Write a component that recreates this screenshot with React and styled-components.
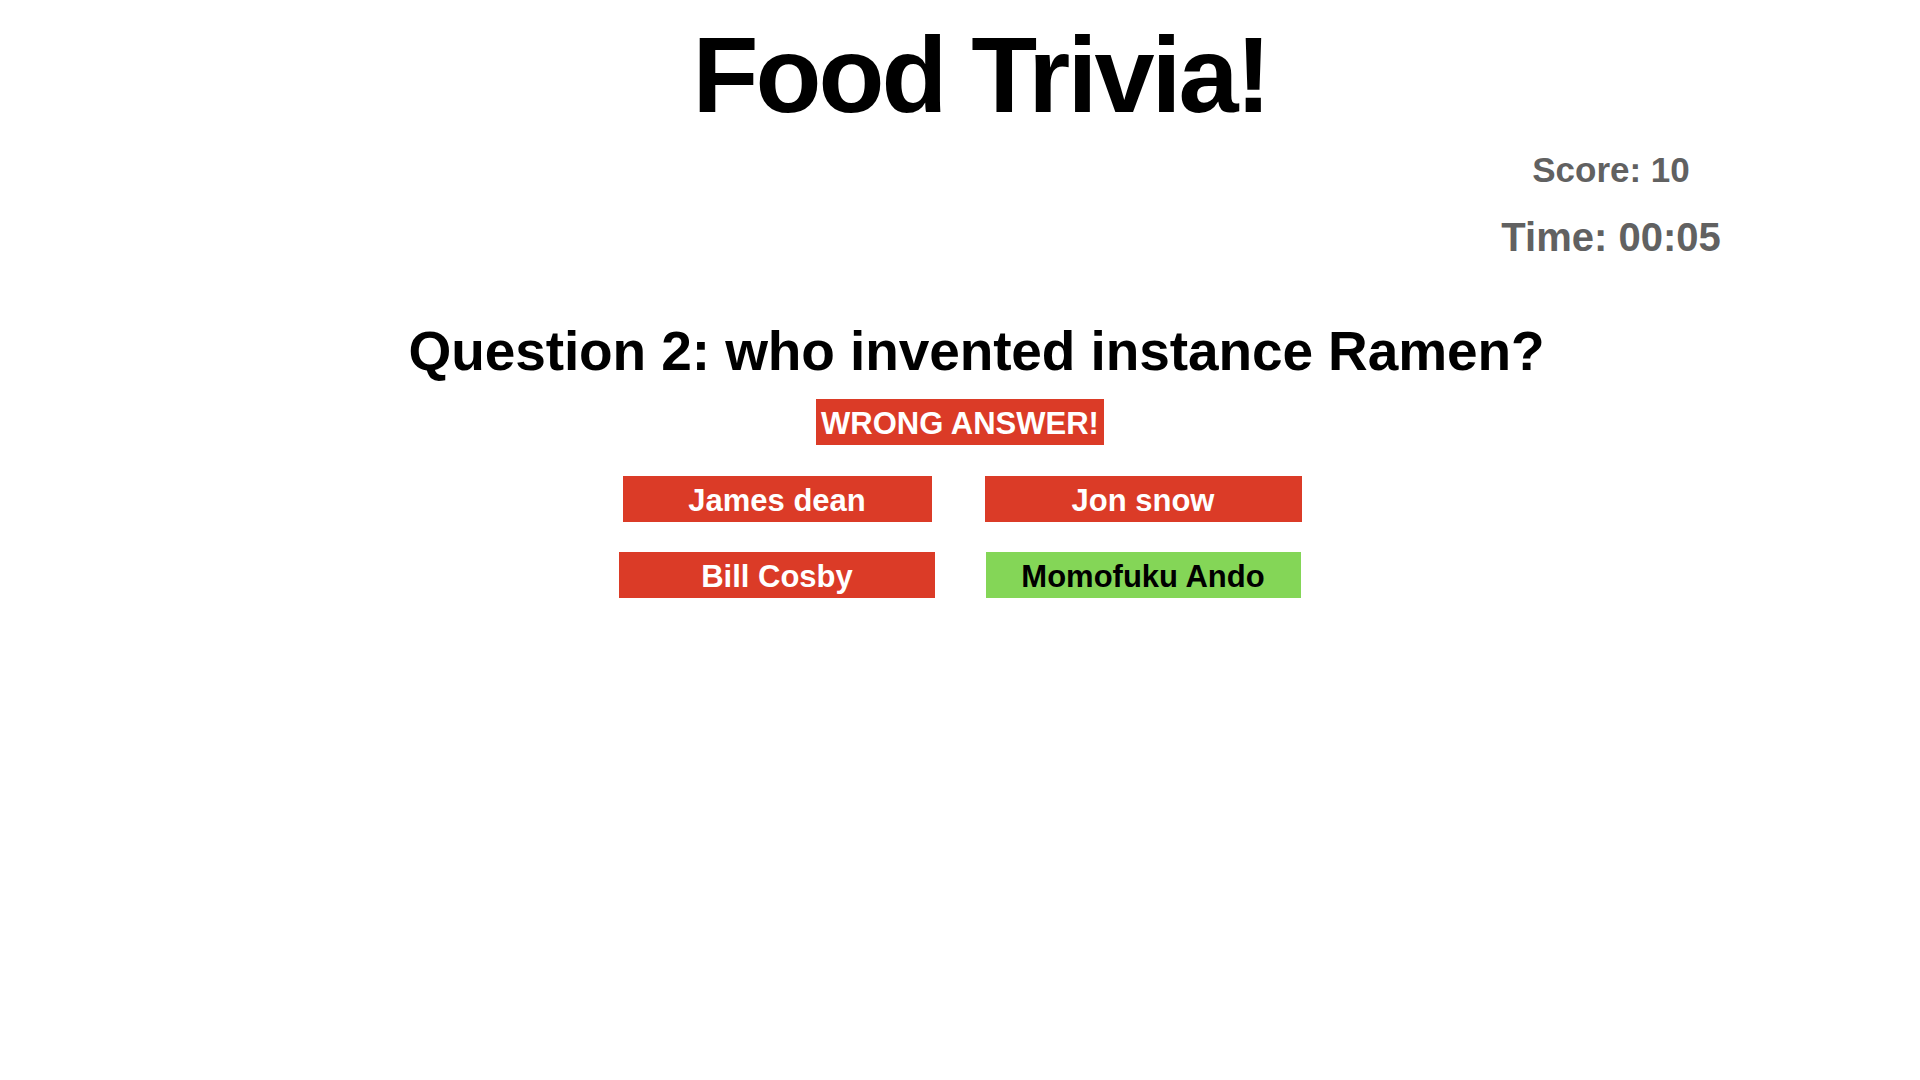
import React from "react";
import styled, { createGlobalStyle } from "styled-components";

const Global = createGlobalStyle`
  html, body {
    margin: 0;
    padding: 0;
    background: #ffffff;
  }
  body {
    font-family: "Liberation Sans", Arial, Helvetica, sans-serif;
    font-weight: 700;
  }
`;

const Page = styled.main`
  width: 1920px;
  min-height: 1080px;
  padding-top: 21px;
  box-sizing: border-box;
  display: flex;
  flex-direction: column;
`;

const Title = styled.h1`
  margin: 0;
  padding-left: 41px;
  font-size: 108px;
  line-height: 108px;
  letter-spacing: -3px;
  font-weight: 700;
  color: #000;
  text-align: center;
`;

const StatsRow = styled.div`
  display: flex;
  justify-content: flex-end;
  padding-right: 189px;
  margin-top: 23px;
`;

const Stats = styled.div`
  width: 240px;
  display: flex;
  flex-direction: column;
  align-items: center;
  gap: 30px;
  color: #616161;
`;

const Stat = styled.div`
  font-size: ${(p) => p.$size}px;
  line-height: ${(p) => p.$size}px;
  white-space: nowrap;
`;

const Question = styled.h2`
  margin: 67px 0 0;
  padding-left: 33px;
  font-size: 55px;
  line-height: 55px;
  letter-spacing: -0.1px;
  font-weight: 700;
  color: #000;
  text-align: center;
`;

const Feedback = styled.div`
  align-self: center;
  margin-top: 20px;
  height: 46px;
  box-sizing: border-box;
  padding: 3px 5px 0;
  line-height: 43px;
  font-size: 31px;
  color: #fff;
  background: #db3b27;
  white-space: nowrap;
`;

const Answers = styled.div`
  align-self: center;
  margin-top: 31px;
  display: grid;
  grid-template-columns: 316px 316px;
  column-gap: 50px;
  row-gap: 30px;
`;

const AnswerButton = styled.button`
  justify-self: center;
  width: ${(p) => p.$w}px;
  height: 46px;
  margin: 0;
  padding: 3px 0 0;
  box-sizing: border-box;
  border: none;
  font-family: "Liberation Sans", Arial, Helvetica, sans-serif;
  font-weight: 700;
  font-size: 31px;
  line-height: 43px;
  white-space: nowrap;
  cursor: pointer;
  color: ${(p) => (p.$correct ? "#000" : "#fff")};
  background: ${(p) => (p.$correct ? "#84d657" : "#db3b27")};
`;

const answers = [
  { text: "James dean", w: 309, correct: false },
  { text: "Jon snow", w: 317, correct: false },
  { text: "Bill Cosby", w: 316, correct: false },
  { text: "Momofuku Ando", w: 315, correct: true },
];

export default function App() {
  return (
    <>
      <Global />
      <Page>
        <Title>Food Trivia!</Title>
        <StatsRow>
          <Stats>
            <Stat $size={35}>Score: 10</Stat>
            <Stat $size={40}>Time: 00:05</Stat>
          </Stats>
        </StatsRow>
        <Question>Question 2: who invented instance Ramen?</Question>
        <Feedback>WRONG ANSWER!</Feedback>
        <Answers>
          {answers.map((a) => (
            <AnswerButton key={a.text} $w={a.w} $correct={a.correct}>
              {a.text}
            </AnswerButton>
          ))}
        </Answers>
      </Page>
    </>
  );
}
